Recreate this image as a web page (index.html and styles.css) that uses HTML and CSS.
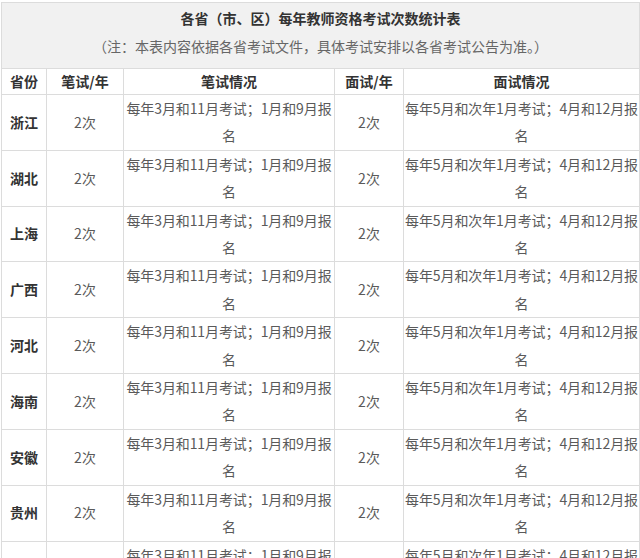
FILE: index.html
```html
<!DOCTYPE html>
<html lang="zh-CN">
<head>
<meta charset="utf-8">
<title>各省（市、区）每年教师资格考试次数统计表</title>
<link rel="stylesheet" href="styles.css">
</head>
<body>
<table class="stats">
  <colgroup>
    <col class="c-prov">
    <col class="c-wnum">
    <col class="c-wdesc">
    <col class="c-inum">
    <col class="c-idesc">
  </colgroup>
  <thead>
    <tr>
      <th colspan="5" class="caption">
        <div class="title">各省（市、区）每年教师资格考试次数统计表</div>
        <div class="note">（注：本表内容依据各省考试文件，具体考试安排以各省考试公告为准。）</div>
      </th>
    </tr>
    <tr class="head">
      <th>省份</th>
      <th>笔试/年</th>
      <th>笔试情况</th>
      <th>面试/年</th>
      <th>面试情况</th>
    </tr>
  </thead>
  <tbody>
    <tr><th class="prov">浙江</th><td>2次</td><td class="desc">每年3月和11月考试；1月和9月报<br>名</td><td>2次</td><td class="desc">每年5月和次年1月考试；4月和12月报<br>名</td></tr>
    <tr><th class="prov">湖北</th><td>2次</td><td class="desc">每年3月和11月考试；1月和9月报<br>名</td><td>2次</td><td class="desc">每年5月和次年1月考试；4月和12月报<br>名</td></tr>
    <tr><th class="prov">上海</th><td>2次</td><td class="desc">每年3月和11月考试；1月和9月报<br>名</td><td>2次</td><td class="desc">每年5月和次年1月考试；4月和12月报<br>名</td></tr>
    <tr><th class="prov">广西</th><td>2次</td><td class="desc">每年3月和11月考试；1月和9月报<br>名</td><td>2次</td><td class="desc">每年5月和次年1月考试；4月和12月报<br>名</td></tr>
    <tr><th class="prov">河北</th><td>2次</td><td class="desc">每年3月和11月考试；1月和9月报<br>名</td><td>2次</td><td class="desc">每年5月和次年1月考试；4月和12月报<br>名</td></tr>
    <tr><th class="prov">海南</th><td>2次</td><td class="desc">每年3月和11月考试；1月和9月报<br>名</td><td>2次</td><td class="desc">每年5月和次年1月考试；4月和12月报<br>名</td></tr>
    <tr><th class="prov">安徽</th><td>2次</td><td class="desc">每年3月和11月考试；1月和9月报<br>名</td><td>2次</td><td class="desc">每年5月和次年1月考试；4月和12月报<br>名</td></tr>
    <tr><th class="prov">贵州</th><td>2次</td><td class="desc">每年3月和11月考试；1月和9月报<br>名</td><td>2次</td><td class="desc">每年5月和次年1月考试；4月和12月报<br>名</td></tr>
    <tr><th class="prov">江苏</th><td>2次</td><td class="desc">每年3月和11月考试；1月和9月报<br>名</td><td>2次</td><td class="desc">每年5月和次年1月考试；4月和12月报<br>名</td></tr>
  </tbody>
</table>
</body>
</html>
```

FILE: styles.css
```css
html, body {
  margin: 0;
  padding: 0;
  background: #ffffff;
}

body {
  font-family: "Noto Sans CJK SC", "Noto Sans", "Liberation Sans", sans-serif;
  font-size: 14px;
  color: #5a5a5a;
  padding: 2px 0 0 1px;
}

.stats {
  width: 638px;
  table-layout: fixed;
  border-collapse: collapse;
}

.c-prov { width: 45px; }
.c-wnum { width: 77px; }
.c-wdesc { width: 211px; }
.c-inum { width: 69px; }
.c-idesc { width: 236px; }

.stats th,
.stats td {
  border: 1px solid #dcdcdc;
  padding: 0;
  text-align: center;
  vertical-align: middle;
  line-height: 27.4px;
}

.stats .caption {
  background: #f1f1f1;
  padding: 1px 0 8px 0;
  font-weight: normal;
}

.title {
  font-weight: bold;
  color: #333333;
  line-height: 28px;
}

.note {
  color: #666666;
  line-height: 28px;
}

.stats .head th {
  font-weight: bold;
  color: #333333;
  height: 25px;
  line-height: 25px;
}

.stats .prov {
  font-weight: bold;
  color: #333333;
}

.stats .desc {
  white-space: nowrap;
  overflow: visible;
  letter-spacing: -0.1px;
}
```
